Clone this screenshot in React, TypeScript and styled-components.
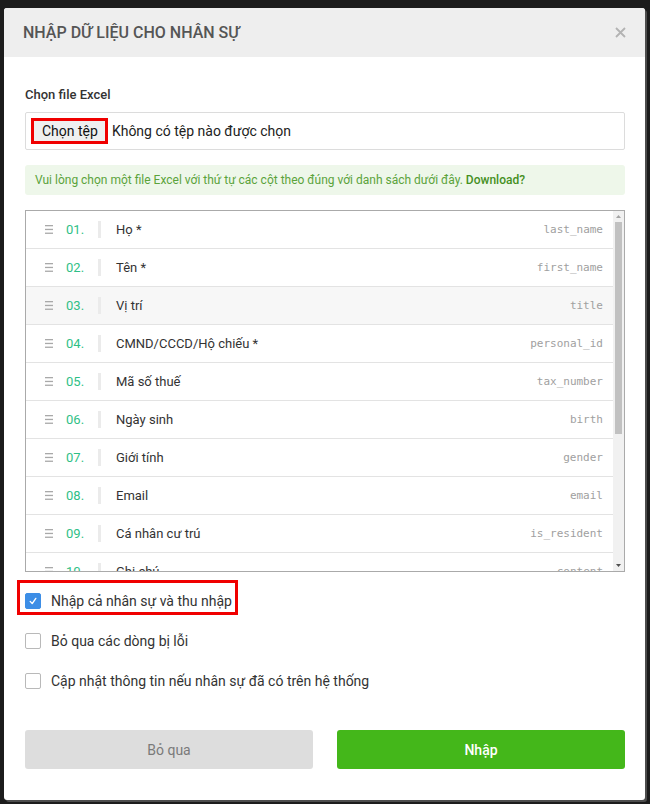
import React from "react";
import styled, { createGlobalStyle } from "styled-components";

const GlobalStyle = createGlobalStyle`
  html, body {
    margin: 0;
    padding: 0;
    background: #1c1c1c;
    font-family: Roboto, "Liberation Sans", sans-serif;
  }
  * { box-sizing: border-box; }
`;

const Page = styled.div`
  padding: 8px 5px 4px 4px;
  width: 650px;
  height: 804px;
`;

const Dialog = styled.div`
  width: 641px;
  height: 792px;
  background: #fff;
  border-radius: 3px;
  box-shadow: 2px 2px 0 #4d4d4d;
  display: flex;
  flex-direction: column;
  overflow: hidden;
`;

const Header = styled.div`
  height: 49px;
  flex: none;
  background: #eeeeee;
  display: flex;
  align-items: center;
  justify-content: space-between;
  padding: 0 18px 0 19px;
`;

const Title = styled.h4`
  margin: 0;
  font-size: 16px;
  font-weight: 500;
  color: #555;
  text-transform: uppercase;
`;

const CloseButton = styled.button`
  border: 0;
  background: none;
  padding: 0;
  width: 14px;
  height: 14px;
  display: flex;
  align-items: center;
  justify-content: center;
  cursor: pointer;
`;

const Body = styled.div`
  flex: 1;
  display: flex;
  flex-direction: column;
  padding: 29px 20px 31px 21px;
`;

const Label = styled.div`
  font-size: 13px;
  line-height: 18px;
  font-weight: 500;
  color: #333;
`;

const FileBox = styled.div`
  margin-top: 8px;
  height: 38px;
  border: 1px solid #dcdcdc;
  border-radius: 2px;
  display: flex;
  align-items: center;
  padding-left: 5px;
  gap: 4px;
  font-size: 14px;
  color: #222;
`;

const FileButton = styled.span`
  height: 26px;
  display: flex;
  align-items: center;
  padding: 0 7px 0 8px;
  border: 3px solid #f00000;
  background: #efefef;
  color: #111;
  font-size: 14px;
`;

const Alert = styled.div`
  margin-top: 15px;
  height: 30px;
  display: flex;
  align-items: center;
  padding: 0 10px;
  background: #eef7ea;
  border-radius: 3px;
  font-size: 12px;
  color: #5ba33b;
`;

const AlertLink = styled.a`
  color: #45901f;
  font-weight: 500;
  margin-left: 3px;
  text-decoration: none;
`;

const List = styled.div`
  margin-top: 15px;
  height: 362px;
  border: 1px solid #aaaaaa;
  display: flex;
`;

const Rows = styled.div`
  flex: 1;
  overflow: hidden;
`;

const ScrollTrack = styled.div`
  width: 11px;
  flex: none;
  background: #f1f1f1;
  display: flex;
  flex-direction: column;
  align-items: center;
`;

const ScrollArrow = styled.div`
  height: 11px;
  width: 11px;
  flex: none;
  display: flex;
  align-items: center;
  justify-content: center;
`;

const ScrollThumb = styled.div`
  width: 7px;
  background: #c1c1c1;
  flex: none;
`;

const ScrollSpace = styled.div`
  flex: 1;
`;

const Row = styled.div<{ $shaded?: boolean }>`
  height: 38px;
  display: flex;
  align-items: center;
  padding: 0 10px 0 19px;
  border-bottom: 1px solid #e3e3e3;
  background: ${(p) => (p.$shaded ? "#f7f7f7" : "#fff")};
`;

const Handle = styled.span`
  width: 8px;
  height: 9px;
  display: flex;
  flex: none;
`;

const Num = styled.span`
  width: 32px;
  margin-left: 13px;
  font-size: 13px;
  color: #2fbf86;
  flex: none;
`;

const Sep = styled.span`
  width: 3px;
  height: 17px;
  background: #ebebeb;
  flex: none;
`;

const FieldName = styled.span`
  margin-left: 15px;
  font-size: 13px;
  color: #333;
  flex: 1;
`;

const FieldKey = styled.span`
  font-family: "DejaVu Sans Mono", monospace;
  font-size: 11px;
  color: #a0a0a0;
`;

const Options = styled.div`
  margin-top: 9px;
  display: flex;
  flex-direction: column;
`;

const Option = styled.label<{ $marked?: boolean }>`
  height: 40px;
  display: flex;
  align-items: center;
  gap: 10px;
  font-size: 14px;
  color: #333;
  position: relative;
  align-self: flex-start;

  &::after {
    content: "";
    display: ${(p) => (p.$marked ? "block" : "none")};
    position: absolute;
    left: -8px;
    right: -6px;
    top: -1px;
    bottom: 6px;
    border: 3px solid #f00000;
    pointer-events: none;
  }
`;

const Box = styled.span<{ $checked?: boolean }>`
  width: 16px;
  height: 16px;
  border-radius: 2px;
  flex: none;
  border: 1px solid ${(p) => (p.$checked ? "#3d8ee6" : "#b9b9b9")};
  background: ${(p) => (p.$checked ? "#3d8ee6" : "#fff")};
  display: flex;
  align-items: center;
  justify-content: center;
`;

const Footer = styled.div`
  margin-top: 29px;
  display: grid;
  grid-template-columns: 1fr 1fr;
  gap: 24px;
`;

const Button = styled.button<{ $primary?: boolean }>`
  height: 39px;
  border: 0;
  border-radius: 3px;
  font-family: Roboto, "Liberation Sans", sans-serif;
  font-size: 14px;
  font-weight: ${(p) => (p.$primary ? 500 : 400)};
  background: ${(p) => (p.$primary ? "#44b71a" : "#dddddd")};
  color: ${(p) => (p.$primary ? "#fff" : "#7a7a7a")};
  cursor: pointer;
`;

const fields: [string, string][] = [
  ["Họ *", "last_name"],
  ["Tên *", "first_name"],
  ["Vị trí", "title"],
  ["CMND/CCCD/Hộ chiếu *", "personal_id"],
  ["Mã số thuế", "tax_number"],
  ["Ngày sinh", "birth"],
  ["Giới tính", "gender"],
  ["Email", "email"],
  ["Cá nhân cư trú", "is_resident"],
  ["Ghi chú", "content"],
];

const HandleIcon = () => (
  <Handle>
    <svg width="8" height="9" viewBox="0 0 8 9">
      <rect x="0" y="0" width="8" height="1.3" fill="#a9a9a9" />
      <rect x="0" y="3.8" width="8" height="1.3" fill="#a9a9a9" />
      <rect x="0" y="7.6" width="8" height="1.3" fill="#a9a9a9" />
    </svg>
  </Handle>
);

const Check = () => (
  <svg width="10" height="10" viewBox="0 0 10 10">
    <path d="M2.2 5.4 L4.2 7.6 L7.8 2.4" fill="none" stroke="#fff" strokeWidth="1.4" strokeLinecap="round" strokeLinejoin="round" />
  </svg>
);

export default function App() {
  return (
    <>
      <GlobalStyle />
      <Page>
        <Dialog>
          <Header>
            <Title>Nhập dữ liệu cho nhân sự</Title>
            <CloseButton aria-label="Đóng">
              <svg width="11" height="11" viewBox="0 0 11 11">
                <path d="M1 1 L10 10 M10 1 L1 10" stroke="#b3b3b3" strokeWidth="1.8" />
              </svg>
            </CloseButton>
          </Header>
          <Body>
            <Label>Chọn file Excel</Label>
            <FileBox>
              <FileButton>Chọn tệp</FileButton>
              <span>Không có tệp nào được chọn</span>
            </FileBox>
            <Alert>
              Vui lòng chọn một file Excel với thứ tự các cột theo đúng với danh sách dưới đây.
              <AlertLink href="#">Download?</AlertLink>
            </Alert>
            <List>
              <Rows>
                {fields.map(([name, key], i) => (
                  <Row key={key} $shaded={i === 2}>
                    <HandleIcon />
                    <Num>{String(i + 1).padStart(2, "0")}.</Num>
                    <Sep />
                    <FieldName>{name}</FieldName>
                    <FieldKey>{key}</FieldKey>
                  </Row>
                ))}
              </Rows>
              <ScrollTrack>
                <ScrollArrow>
                  <svg width="5" height="3" viewBox="0 0 5 3">
                    <polygon points="0,3 5,3 2.5,0" fill="#a3a3a3" />
                  </svg>
                </ScrollArrow>
                <ScrollThumb style={{ height: 212 }} />
                <ScrollSpace />
                <ScrollArrow>
                  <svg width="5" height="3" viewBox="0 0 5 3">
                    <polygon points="0,0 5,0 2.5,3" fill="#505050" />
                  </svg>
                </ScrollArrow>
              </ScrollTrack>
            </List>
            <Options>
              <Option $marked>
                <Box $checked>
                  <Check />
                </Box>
                Nhập cả nhân sự và thu nhập
              </Option>
              <Option>
                <Box />
                Bỏ qua các dòng bị lỗi
              </Option>
              <Option>
                <Box />
                Cập nhật thông tin nếu nhân sự đã có trên hệ thống
              </Option>
            </Options>
            <Footer>
              <Button>Bỏ qua</Button>
              <Button $primary>Nhập</Button>
            </Footer>
          </Body>
        </Dialog>
      </Page>
    </>
  );
}
